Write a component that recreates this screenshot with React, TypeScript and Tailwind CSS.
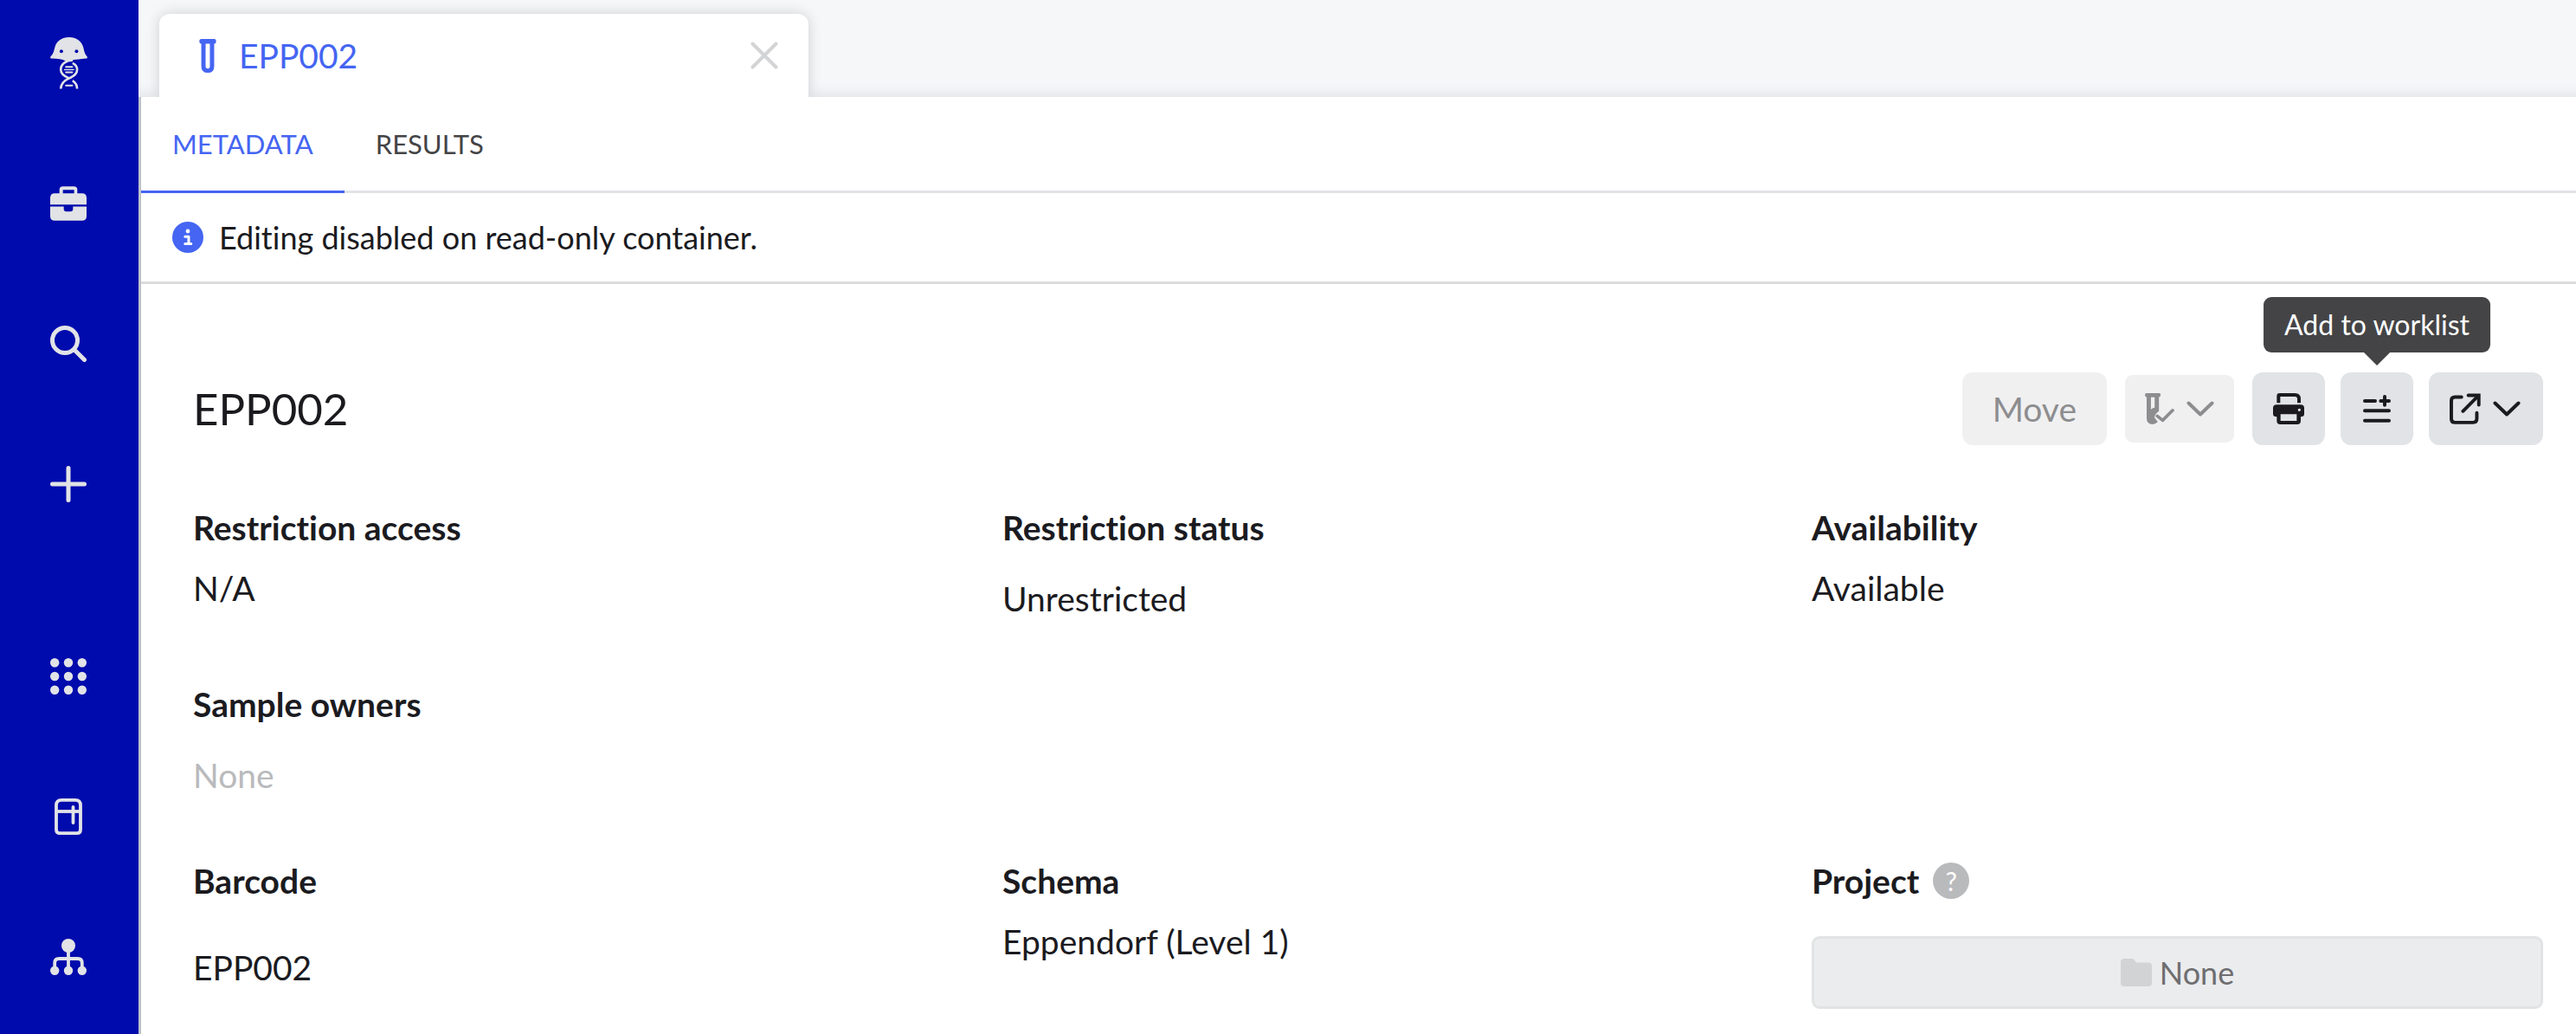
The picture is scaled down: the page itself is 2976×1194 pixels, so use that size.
import type { ReactNode } from "react";
import clsx from "clsx";

const LogoIcon = () => (
  <svg viewBox="171 128 130 181" className="h-[60px] w-[43px]" fill="none" stroke="currentColor">
    <path
      fill="currentColor"
      stroke="none"
      d="M237 128C207 128 191 146 187 164C183 180 180 188 173 194C170 198 171 202 176 202C198 203 214 205 224 210C240 214 246 206 262 206C276 204 286 203 296 202C302 201 302 197 299 194C292 187 290 178 287 164C282 146 267 128 237 128Z"
    />
    <circle cx="210" cy="177" r="6" fill="#000bad" stroke="none" />
    <circle cx="263" cy="177" r="6" fill="#000bad" stroke="none" />
    <g strokeWidth="8">
      <path d="M250 208C225 209 208 222 208 241C208 256 220 264 237 271C220 279 208 288 208 308" />
      <path d="M249 218C260 223 265 231 265 241C265 256 254 264 237 271" />
      <path d="M249 279C260 286 265 295 265 308" />
    </g>
    <path strokeWidth="6" d="M226 231H248M226 250H248M226 296H248" strokeLinecap="round" />
    <path strokeWidth="4" d="M219 241H255" />
  </svg>
);

const BriefcaseIcon = () => (
  <svg viewBox="174 642 126 119" className="h-10 w-[42px]" fill="currentColor">
    <path d="M206 666V654Q206 642 218 642H256Q268 642 268 654V666H284Q300 666 300 682V705H174V682Q174 666 190 666ZM218 666H257V654H218Z" fillRule="evenodd" />
    <path d="M174 712H221V720Q221 729 230 729H244Q253 729 253 720V712H300V745Q300 761 284 761H190Q174 761 174 745Z" />
  </svg>
);

const SearchIcon = () => (
  <svg viewBox="0 0 42 42" className="size-[42px]" fill="none" stroke="currentColor" strokeWidth="5" strokeLinecap="round">
    <circle cx="17" cy="17" r="14.5" />
    <path d="M28 28L39.5 39.5" />
  </svg>
);

const PlusIcon = () => (
  <svg viewBox="0 0 42 42" className="size-[42px]" stroke="currentColor" strokeWidth="5" strokeLinecap="round">
    <path d="M21 2.5V39.5M2.5 21H39.5" />
  </svg>
);

const GridIcon = () => (
  <svg viewBox="0 0 42 42" className="size-[42px]" fill="currentColor">
    {[5.2, 21, 36.8].map((y) =>
      [5.2, 21, 36.8].map((x) => <circle key={`${x}-${y}`} cx={x} cy={y} r="5.2" />)
    )}
  </svg>
);

const FridgeIcon = () => (
  <svg viewBox="0 0 32 42" className="h-[42px] w-8" fill="none" stroke="currentColor" strokeWidth="3.8">
    <path d="M8 1.9H24Q30 1.9 30 8V36Q30 40.1 26 40.1H6Q2 40.1 2 36V8Q2 1.9 8 1.9Z" />
    <path d="M2 15H30" />
    <path d="M21.5 10V28" strokeLinecap="round" />
  </svg>
);

const TreeIcon = () => (
  <svg viewBox="0 0 42 42" className="size-[42px]" fill="currentColor">
    <circle cx="21" cy="8" r="8" />
    <circle cx="5.2" cy="36.8" r="5.2" />
    <circle cx="21" cy="36.8" r="5.2" />
    <circle cx="36.8" cy="36.8" r="5.2" />
    <path d="M21 12V36M5.2 36V28Q5.2 23 10.2 23H31.8Q36.8 23 36.8 28V36" fill="none" stroke="currentColor" strokeWidth="3.8" />
  </svg>
);

const TubeIcon = () => (
  <svg viewBox="689 134 59 118" className="h-[39px] w-5" fill="currentColor">
    <path fillRule="evenodd" d="M695 134H742Q748 134 748 142Q748 150 741 151V229Q741 252 719 252Q696 252 696 229V151Q689 150 689 142Q689 134 695 134ZM711 151V228Q711 238 719 238Q726 238 726 228V151Z" />
  </svg>
);

const TubeCheckIcon = () => (
  <svg viewBox="714 401 103 109" className="h-9 w-[34px]" fill="currentColor">
    <path fillRule="evenodd" d="M719 401H764Q769 401 769 408Q769 414 763 415V464Q757 468 752 474Q746 482 749 489L759 501Q751 510 741 510Q720 510 720 489V415Q714 414 714 408Q714 401 719 401ZM735 415V458Q742 452 748 452V415Z" />
    <path d="M757 481L776 496L811 461" fill="none" stroke="currentColor" strokeWidth="11" strokeLinecap="round" strokeLinejoin="round" />
  </svg>
);

const ChevronIcon = () => (
  <svg viewBox="0 0 32 18" className="h-[18px] w-8" fill="none" stroke="currentColor" strokeWidth="4" strokeLinecap="round" strokeLinejoin="round">
    <path d="M2.5 2.5L16 15.5L29.5 2.5" />
  </svg>
);

const PrinterIcon = () => (
  <svg viewBox="138 402 108 108" className="size-9" fill="currentColor">
    <path d="M157 436V412Q157 408 161 408H214Q228 408 228 422V436" fill="none" stroke="currentColor" strokeWidth="12" />
    <path fillRule="evenodd" d="M150 442H234Q246 442 246 454V474Q246 484 234 484V498Q234 510 222 510H163Q151 510 151 498V484Q138 484 138 474V454Q138 442 150 442ZM164 475V498H220V475ZM229 455A5 5 0 1 0 229 465A5 5 0 1 0 229 455Z" />
  </svg>
);

const WorklistIcon = () => (
  <svg viewBox="450 408 96 96" className="size-8" fill="none" stroke="currentColor" strokeWidth="12" strokeLinecap="round">
    <path d="M456 429H492M511 429H540M525 414V443M456 463H540M456 497H540" />
  </svg>
);

const OpenIcon = () => (
  <svg viewBox="749 401 110 109" className="size-9" fill="none" stroke="currentColor" strokeWidth="12" strokeLinecap="round">
    <path d="M791 414H768Q755 414 755 427V491Q755 504 768 504H832Q845 504 845 491V470M796 464L850 410" />
    <path d="M815 408H852V442" strokeLinejoin="miter" />
  </svg>
);

const CloseIcon = () => (
  <svg viewBox="0 0 32 32" className="size-8" stroke="currentColor" strokeWidth="4" strokeLinecap="round">
    <path d="M2.5 2.5L29.5 29.5M29.5 2.5L2.5 29.5" />
  </svg>
);

const InfoIcon = () => (
  <svg viewBox="0 0 36 36" className="size-9">
    <circle cx="18" cy="18" r="18" fill="#4565f2" />
    <circle cx="18" cy="11" r="2.4" fill="#fff" />
    <path d="M14.8 17.3H19V25.3M14.8 25.6H21.8" fill="none" stroke="#fff" strokeWidth="3" strokeLinecap="round" strokeLinejoin="round" />
  </svg>
);

const FolderIcon = () => (
  <svg viewBox="0 0 36 32" className="h-8 w-9" fill="currentColor">
    <path d="M4 0H13Q15 0 16 2L18 4.5H32Q36 4.5 36 8.5V28Q36 32 32 32H4Q0 32 0 28V4Q0 0 4 0Z" />
  </svg>
);

const navItems = [
  { label: "Projects", icon: BriefcaseIcon },
  { label: "Search", icon: SearchIcon },
  { label: "Create", icon: PlusIcon },
  { label: "Apps", icon: GridIcon, spaced: true },
  { label: "Inventory", icon: FridgeIcon },
  { label: "Workflows", icon: TreeIcon },
];

function NavSidebar() {
  return (
    <nav className="flex w-40 shrink-0 flex-col bg-[#000bad] pr-0.5 text-[#e1e3e6]">
      <a href="#home" aria-label="Home" className="mb-2 flex h-[146px] items-center justify-center">
        <LogoIcon />
      </a>
      {navItems.map((item) => (
        <a
          key={item.label}
          href={`#${item.label.toLowerCase()}`}
          aria-label={item.label}
          className={clsx("flex h-[162px] items-center justify-center", item.spaced && "mt-[60px]")}
        >
          <item.icon />
        </a>
      ))}
    </nav>
  );
}

interface FieldProps {
  label: string;
  help?: boolean;
  className?: string;
  children: ReactNode;
}

function Field({ label, help, className, children }: FieldProps) {
  return (
    <div className="h-[204px]">
      <dt className="flex h-[52px] items-center gap-4 font-bold">
        {label}
        {help && (
          <button aria-label="Help" className="flex size-[42px] items-center justify-center rounded-full bg-[#b9babc] text-[30px] font-normal text-white">
            ?
          </button>
        )}
      </dt>
      <dd className={className}>{children}</dd>
    </div>
  );
}

export default function App() {
  return (
    <div className="flex min-h-screen bg-white font-['Lato',sans-serif] text-[39px] leading-[52px] text-[#1b1b1f] [font-variant-ligatures:none]">
      <NavSidebar />
      <div className="flex min-w-0 flex-1 flex-col">
        <header className="flex h-28 items-end overflow-hidden bg-[#f6f7f9] pl-6 shadow-[inset_0_-18px_14px_-14px_#dfe5e9]">
          <div className="flex h-24 w-[750px] items-center rounded-t-xl bg-white pr-[35px] pl-[46px] text-[#4565f2] shadow-[0_0_16px_rgba(0,0,0,0.16)]">
            <TubeIcon />
            <span className="ml-[26px] flex-1">EPP002</span>
            <button aria-label="Close tab" className="text-[#d3d4d6]">
              <CloseIcon />
            </button>
          </div>
        </header>

        <div className="flex-1 border-l-3 border-[#bcc3c9]">
          <div role="tablist" className="flex h-[111px] border-b-3 border-[#e1e3e6] text-[31px]">
            <button role="tab" aria-selected="true" className="-mb-[3px] border-b-3 border-[#4565f2] px-9 text-[#4565f2]">
              METADATA
            </button>
            <button role="tab" aria-selected="false" className="px-9 text-[#444446]">
              RESULTS
            </button>
          </div>

          <div className="flex h-[105px] items-center gap-[18px] border-b-3 border-[#dcdcde] pl-9 text-[36px]">
            <InfoIcon />
            <p>Editing disabled on read-only container.</p>
          </div>

          <main className="pt-[102px] pr-[38px] pl-[60px]">
            <div className="flex items-center">
              <h1 className="flex-1 text-[51px]">EPP002</h1>
              <button disabled className="h-[84px] rounded-xl bg-[#f0f0f1] px-[35px] text-[#8d8d8f]">
                Move
              </button>
              <button disabled aria-label="Sample actions" className="ml-[21px] flex h-[78px] items-center gap-[14px] rounded-[9px] bg-[#f0f0f1] px-[23px] text-[#8d8d8f]">
                <TubeCheckIcon />
                <ChevronIcon />
              </button>
              <button aria-label="Print" className="ml-[21px] flex size-[84px] items-center justify-center rounded-xl bg-[#e1e3e6]">
                <PrinterIcon />
              </button>
              <div className="relative ml-[18px]">
                <button aria-labelledby="worklist-tip" className="flex size-[84px] items-center justify-center rounded-xl bg-[#e1e3e6]">
                  <WorklistIcon />
                </button>
                <div
                  id="worklist-tip"
                  role="tooltip"
                  className="absolute bottom-full left-1/2 mb-[23px] flex h-16 -translate-x-1/2 items-center rounded-[9px] bg-[#444446] px-6 text-[32px] whitespace-nowrap text-white"
                >
                  Add to worklist
                  <span className="absolute top-full left-1/2 -translate-x-1/2 border-x-15 border-t-15 border-x-transparent border-t-[#444446]" />
                </div>
              </div>
              <button aria-label="Open in" className="ml-[18px] flex h-[84px] items-center gap-[14px] rounded-xl bg-[#e1e3e6] pr-[26px] pl-6">
                <OpenIcon />
                <ChevronIcon />
              </button>
            </div>

            <dl className="mt-[69px] grid grid-cols-3 gap-x-[90px]">
              <Field label="Restriction access" className="pt-[18px]">N/A</Field>
              <Field label="Restriction status" className="pt-[30px]">Unrestricted</Field>
              <Field label="Availability" className="pt-[18px]">Available</Field>
              <div className="col-span-3">
                <Field label="Sample owners" className="pt-[30px] text-[#b9babc]">None</Field>
              </div>
              <Field label="Barcode" className="pt-12">EPP002</Field>
              <Field label="Schema" className="pt-[18px]">Eppendorf (Level 1)</Field>
              <Field label="Project" help className="pt-[38px]">
                <button disabled className="flex h-[84px] w-full items-center justify-center gap-[9px] rounded-[9px] border-3 border-[#e1e3e4] bg-[#ebecee] text-[36px] text-[#6e6e70]">
                  <span className="text-[#d2d3d5]">
                    <FolderIcon />
                  </span>
                  None
                </button>
              </Field>
            </dl>
          </main>
        </div>
      </div>
    </div>
  );
}
